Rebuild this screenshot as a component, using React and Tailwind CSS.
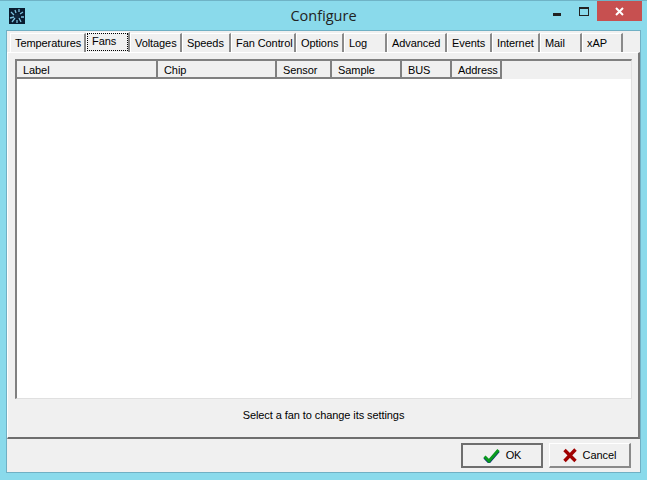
import React from 'react';

const tabs = [
  { label: 'Temperatures', width: 'w-[76px]' },
  { label: 'Fans', width: 'w-[44px]', active: true },
  { label: 'Voltages', width: 'w-[52px]' },
  { label: 'Speeds', width: 'w-[49px]' },
  { label: 'Fan Control', width: 'w-[65px]' },
  { label: 'Options', width: 'w-[48px]' },
  { label: 'Log', width: 'w-[43px]' },
  { label: 'Advanced', width: 'w-[60px]' },
  { label: 'Events', width: 'w-[45px]' },
  { label: 'Internet', width: 'w-[48px]' },
  { label: 'Mail', width: 'w-[42px]' },
  { label: 'xAP', width: 'w-[41px]' }
];

const columns = [
  { label: 'Label', width: 'w-[141px]' },
  { label: 'Chip', width: 'w-[119px]' },
  { label: 'Sensor', width: 'w-[55px]' },
  { label: 'Sample', width: 'w-[70px]' },
  { label: 'BUS', width: 'w-[50px]' },
  { label: 'Address', width: 'w-[50px]' }
];

const FanIcon = () => (
  <svg width="16" height="16" viewBox="0 0 16 16" className="block">
    <rect width="16" height="16" fill="#0a1c30" />
    <circle cx="8" cy="8" r="2.5" fill="#12283e" />
    <path
      d="M6 2l1 3M10 1v3M14 4l-3 2M15 9h-3M12 14l-2-4M8 15v-3M3 14l3-4M1 10l4-1M2 4l3 3"
      stroke="#7cc0de"
      strokeWidth="1.3"
      fill="none"
    />
  </svg>
);

const Tab = ({ label, width, active }) => (
  <div
    className={`${width} flex shrink-0 whitespace-nowrap border-t border-l border-t-white border-l-white border-r-2 border-r-[#8a8a8a] ${
      active ? 'relative z-10 h-[20px]' : 'mt-[1px] h-[19px] pl-[4px] pt-[2px]'
    }`}>
    {active ? (
      <span className="h-[18px] w-[41px] border border-dotted border-black pl-[4px] leading-[15px]">{label}</span>
    ) : (
      <span className="leading-[15px]">{label}</span>
    )}
  </div>
);

const DialogButton = ({ children, isDefault }) => (
  <button
    className={`flex h-[25px] w-[82px] items-center justify-center gap-[6px] border-solid bg-[#f0f0f0] ${
      isDefault
        ? 'border-2 border-[#6e6e6e]'
        : 'border border-t-white border-l-white border-r-2 border-b-2 border-r-[#8a8a8a] border-b-[#8a8a8a]'
    }`}>
    {children}
  </button>
);

const App = () => {
  return (
    <div
      className="flex h-[480px] w-[647px] flex-col overflow-hidden border-t border-[#6fb3c6] bg-[#8adaeb] text-[11px] tracking-[-0.08px] text-black"
      style={{ fontFamily: '"Liberation Sans", Arial, sans-serif' }}>
      <div className="relative flex h-[29px] shrink-0 items-center justify-center pt-[1px]">
        <div className="absolute left-[9px] top-[7px]">
          <FanIcon />
        </div>
        <span className="text-[14.5px] tracking-normal text-[#222]" style={{ fontFamily: '"Open Sans", sans-serif' }}>
          Configure
        </span>
        <div className="absolute left-[553px] top-[12px] h-[3px] w-[8px] bg-[#222]" />
        <div className="absolute left-[579px] top-[6px] h-[9px] w-[10px] border border-t-2 border-[#222]" />
        <div className="absolute left-[597px] top-0 flex h-[20px] w-[45px] items-center justify-center bg-[#c75050]">
          <svg width="9" height="9" viewBox="0 0 9 9">
            <path d="M1 1l7 7M8 1l-7 7" stroke="#fff" strokeWidth="2" fill="none" />
          </svg>
        </div>
      </div>

      <div className="mx-[6px] mb-[7px] flex min-h-0 flex-1 flex-col border border-[#70b0c4] bg-[#f0f0f0]">
        <div className="flex-1 pt-[1px]">
          <div className="flex h-[20px] pl-[3px]">
            {tabs.map((tab) => (
              <Tab key={tab.label} {...tab} />
            ))}
          </div>
          <div className="flex h-[387px] flex-col border-t border-l border-t-white border-l-white border-r-2 border-b-2 border-r-[#7a7a7a] border-b-[#6e6e6e] pl-[7px] pr-[6px] pt-[6px]">
            <div className="flex h-[340px] flex-col border-t-2 border-l-2 border-t-[#808080] border-l-[#808080] border-r border-b border-r-[#e0e0e0] border-b-[#e0e0e0] bg-white">
              <div className="flex h-[18px] bg-[#f0f0f0]">
                {columns.map((col) => (
                  <div
                    key={col.label}
                    className={`${col.width} shrink-0 border-r-2 border-b-2 border-r-[#808080] border-b-[#808080] pl-[6px] leading-[18px]`}>
                    {col.label}
                  </div>
                ))}
              </div>
            </div>
            <p className="mt-[8px] text-center">Select a fan to change its settings</p>
          </div>
          <div className="flex justify-end gap-[6px] pr-[9px] pt-[4px]">
            <DialogButton isDefault>
              <svg width="17" height="15" viewBox="0 0 17 15">
                <path d="M1.5 9.5L6 14L15.5 3" stroke="#0b2a7a" strokeWidth="3" fill="none" />
                <path d="M1.5 8.5L6 13L15.5 2" stroke="#0a9a1e" strokeWidth="3" fill="none" />
              </svg>
              OK
            </DialogButton>
            <DialogButton>
              <svg width="14" height="15" viewBox="0 0 14 15">
                <path d="M1.5 2L12.5 13M12.5 1.5L1.5 13" stroke="#a00000" strokeWidth="3.4" fill="none" />
              </svg>
              Cancel
            </DialogButton>
          </div>
        </div>
      </div>
    </div>
  );
};

export default App;
